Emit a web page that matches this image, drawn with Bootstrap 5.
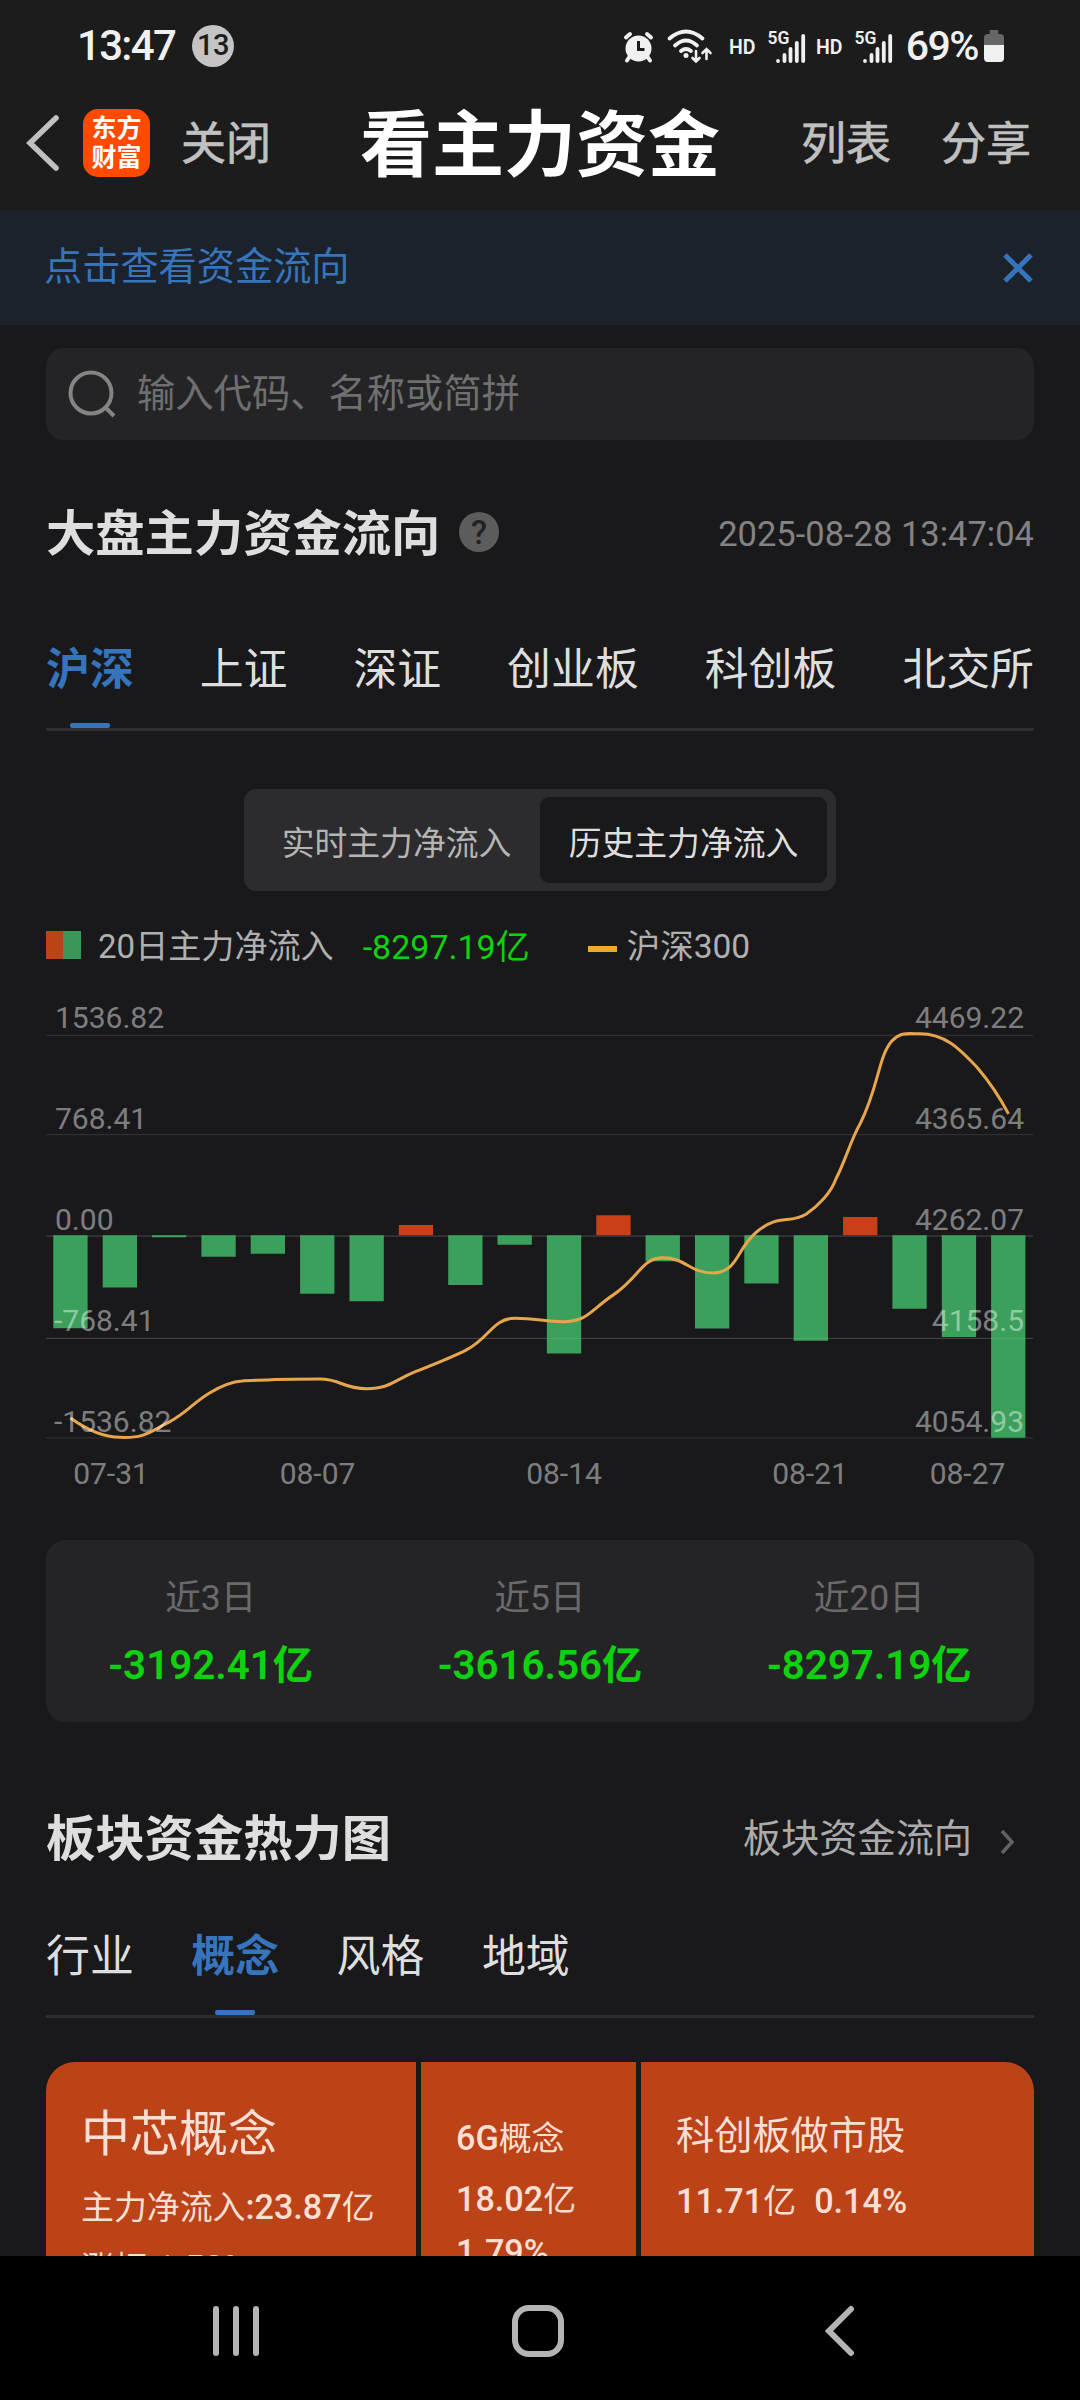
<!DOCTYPE html>
<html lang="zh-CN">
<head>
<meta charset="utf-8">
<meta name="viewport" content="width=device-width, initial-scale=1">
<title>看主力资金</title>
<link href="https://cdn.jsdelivr.net/npm/bootstrap@5.3.0/dist/css/bootstrap.min.css" rel="stylesheet">
<style>
  html, body { height: 2400px; overflow: hidden; }
  body { background: #19191b; color: #dedede; font-family: Roboto, "Noto Sans CJK SC", sans-serif; line-height: 1; }
  svg { display: block; flex: none; }
  .screen { width: 1080px; height: 2400px; }
  .statusbar { height: 76px; background: #1c1c1c; padding: 16px 76px 0 77px; color: #f0f0f0; }
  .clock { font-size: 42px; font-weight: 500; letter-spacing: -1.7px; width: 115px; padding-top: 1px; }
  .notif { width: 42px; height: 42px; background: #c4c4c4; color: #1c1c1c; font-size: 29px; font-weight: 500; letter-spacing: -.5px; }
  .batt { font-size: 41px; font-weight: 500; letter-spacing: -1.5px; margin-left: 2px; margin-right: 2px; }
  .titlebar { height: 134px; background: #1c1c1c; padding: 2px 49px 0 26px; color: #c0c0c0; font-size: 45px; -webkit-text-stroke: .7px #c0c0c0; }
  .titlebar > svg, .applogo { margin-top: -2px; }
  .titlebar h1 { font-size: 72px; font-weight: 700; color: #fff; line-height: 1; -webkit-text-stroke: 0; padding: 3px 0 0 8px; }
  .applogo { width: 67px; height: 68px; border-radius: 15px; background: #ff4a00; color: #fff; font-size: 25px; font-weight: 700; line-height: 29px; -webkit-text-stroke: 0; }
  .notice { height: 115px; background: #1c222b; color: #3674bc; padding: 0 47px 0 44px; font-size: 38.2px; }
  .page { padding: 23px 46px 0; height: 1931px; overflow: hidden; }
  .searchbox { height: 92px; border-radius: 18px; background: #242426; padding-left: 22px; font-size: 38.3px; color: #6f6f6f; }
  .sect { font-size: 49.3px; font-weight: 700; line-height: 1; padding-top: 4px; }
  .stamp { font-size: 34.5px; color: #838383; padding-top: 2px; }
  .tabline { border-bottom: 3px solid #2e2e30; font-size: 43.9px; }
  .tabline .nav-link { padding: 23px 0 0; color: #dedede; height: 100%; }
  .tabline .nav-link.active { color: #3674bc; font-weight: 700; position: relative; }
  .tabline .nav-link.active::after { content: ""; position: absolute; left: 50%; margin-left: -20px; bottom: 0; width: 40px; height: 5px; border-radius: 2px; background: #3674bc; }
  .seg { width: 592px; height: 102px; border-radius: 12px; background: #2c2c2e; padding: 8px 9px; }
  .seg .btn { font-size: 32.8px; line-height: 1; border: 0; border-radius: 9px; color: #b4b4b4; padding: 8px 0 0; }
  .seg .btn.active { background: #19191b; color: #dedede; }
  .legend { font-size: 33.1px; color: #b0b0b0; height: 40px; }
  .legend span { flex: none; }
  .up-down { width: 35px; height: 28px; background: linear-gradient(90deg, #bc4317 49%, #3a9658 49%); }
  .dash { width: 29px; height: 6px; background: #f6a530; }
  .down { color: #0fd20f; }
  .sumbox { height: 182px; border-radius: 20px; background: #242426; padding-top: 8px; }
  .sumbox .lbl { font-size: 35.5px; color: #6a6a6a; line-height: 40px; margin-top: -3px; }
  .sumbox .val { font-size: 40.3px; font-weight: 600; line-height: 46px; padding-top: 1px; }
  .more { font-size: 38.2px; color: #ababab; padding-top: 3px; }
  .heat { height: 300px; border-radius: 29px 29px 0 0; overflow: hidden; gap: 5px; color: #fbdfd4; font-weight: 500; font-size: 34.2px; }
  .heat > div { background: #bc4317; white-space: nowrap; }
  .heat span { font-weight: 400; font-size: 32.9px; }
  .heat .fs-big { font-size: 49px; }
  .heat .fs-mid { font-size: 38.2px; }
  .navkeys { height: 144px; background: #000; position: relative; z-index: 1; padding: 49px 225px 0 213px; }
</style>
</head>
<body>
<div class="screen d-flex flex-column">
  <div class="statusbar d-flex align-items-start justify-content-between flex-shrink-0">
    <div class="d-flex align-items-center pt-2">
      <div class="clock">13:47</div>
      <div class="notif rounded-circle d-flex align-items-center justify-content-center">13</div>
    </div>
    <div class="d-flex align-items-center">
      <svg width="282" height="60" viewBox="622 16 282 60" fill="none" stroke="#f0f0f0" stroke-linecap="round">
        <circle cx="638.500" cy="48.500" r="13" fill="#f0f0f0" stroke="none"/>
        <path d="M626 37.500l4-3.500M651 37.500l-4-3.500M629 57.500l-2 3M648 57.500l2 3" stroke-width="4"/>
        <path d="M638.500 41v8.500h6" stroke="#1c1c1c" stroke-width="3" stroke-linecap="butt"/>
        <path d="M669.500 38.500Q686 24.500 702.500 38.500M675 45.500Q686 35.500 697 45.500M681 51Q686 47 691 51" stroke-width="3.800"/>
        <circle cx="686" cy="55.500" r="2.500" fill="#f0f0f0" stroke="none"/>
        <path d="M696 51v10M692.500 58l3.500 3.500 3.500-3.500M706.500 59v-10M702.500 53l4-4 4 4" stroke-width="2.600"/>
        <g stroke-width="3.800">
          <path d="M778 61v0M784.500 55v6M790.500 49v12M796.800 43v18M803.200 36v25"/>
          <path d="M865 61v0M871.500 55v6M877.500 49v12M883.800 43v18M890.200 36v25"/>
        </g>
        <g fill="#f0f0f0" stroke="none" font-family="Roboto" font-weight="600">
          <text x="729" y="53.500" font-size="19.500">HD</text>
          <text x="767.500" y="43.500" font-size="17.500">5G</text>
          <text x="816" y="53.500" font-size="19.500">HD</text>
          <text x="854.500" y="43.500" font-size="17.500">5G</text>
        </g>
      </svg>
      <div class="batt">69%</div>
      <svg width="20" height="32" viewBox="0 0 21 32" preserveAspectRatio="none" class="ms-1"><path d="M6 0h9v4h2q4 0 4 4v7H0V8q0-4 4-4h2z" fill="#666"/><path d="M0 15h21v13q0 4-4 4H4q-4 0-4-4z" fill="#f0f0f0"/></svg>
    </div>
  </div>

  <header class="titlebar d-flex align-items-center flex-shrink-0">
    <svg width="33" height="58" viewBox="0 0 33 58" fill="none" stroke="#c0c0c0" stroke-width="5.500" stroke-linecap="round"><path d="M30 4L4 29l26 25"/></svg>
    <div class="applogo text-center ms-4 d-flex flex-column justify-content-center">东方<br>财富</div>
    <div class="ms-4" style="padding-left:7px">关闭</div>
    <h1 class="mb-0 mx-auto">看主力资金</h1>
    <div>列表</div>
    <div style="margin-left:50px">分享</div>
  </header>

  <div class="notice d-flex align-items-center justify-content-between flex-shrink-0">
    <span>点击查看资金流向</span>
    <svg width="30" height="30" viewBox="0 0 30 30" stroke="#3674bc" stroke-width="5"><path d="M2 2l26 26M28 2L2 28"/></svg>
  </div>

  <main class="page d-flex flex-column flex-grow-1">
    <div class="searchbox d-flex align-items-center flex-shrink-0">
      <svg width="48" height="48" viewBox="0 0 48 48" fill="none" stroke="#848484" stroke-width="4"><circle cx="23" cy="23" r="20.500"/><path d="M37 37l9 9"/></svg>
      <span style="margin-left:21px">输入代码、名称或简拼</span>
    </div>

    <div class="d-flex align-items-center flex-shrink-0" style="height:186px">
      <h2 class="sect mb-0">大盘主力资金流向</h2>
      <svg width="42" height="42" viewBox="0 0 42 42" style="margin-left:18px"><circle cx="21" cy="20" r="20" fill="#5c5c5c"/><text x="21" y="31.500" text-anchor="middle" font-size="33" font-weight="500" font-family="Roboto" fill="#222">?</text></svg>
      <span class="stamp ms-auto">2025-08-28 13:47:04</span>
    </div>

    <ul class="tabline nav flex-nowrap justify-content-between flex-shrink-0" style="height:105px">
      <li><a class="nav-link active">沪深</a></li>
      <li><a class="nav-link">上证</a></li>
      <li><a class="nav-link">深证</a></li>
      <li><a class="nav-link">创业板</a></li>
      <li><a class="nav-link">科创板</a></li>
      <li><a class="nav-link">北交所</a></li>
    </ul>

    <div class="seg d-flex mx-auto flex-shrink-0" style="margin-top:58px">
      <button class="btn flex-fill">实时主力净流入</button>
      <button class="btn active flex-fill">历史主力净流入</button>
    </div>

    <div class="legend d-flex align-items-center flex-shrink-0" style="margin-top:36px">
      <span class="up-down" style="margin-top:-4px"></span>
      <span style="margin-left:17px">20日主力净流入</span>
      <span class="down" style="margin-left:29px;font-size:34px">-8297.19亿</span>
      <span class="dash" style="margin-left:58px;margin-top:4px"></span>
      <span style="margin-left:10px;font-size:33.500px">沪深300</span>
    </div>

    <svg width="988" height="522" viewBox="46 967 988 522" class="flex-shrink-0">
      <g transform="matrix(1 0 0 1.014 0 -13.700)">
      <path d="M46 1034.500H1033M46 1132.500H1033M46 1232.500H1033M46 1333.500H1033M46 1431.500H1033" stroke="#303032" stroke-width="1.200"/>
      <g fill="#3ba05b">
        <path d="M53.300 1231.700h34.300v91.600h-34.300zM102.700 1231.700h34.300v51.600h-34.300zM152 1231.700h34.300v2h-34.300zM201.400 1231.700h34.300v21.300h-34.300zM250.700 1231.700h34.300v18.300h-34.300zM300.100 1231.700h34.300v57.600h-34.300zM349.500 1231.700h34.300v65h-34.300zM448.200 1231.700h34.300v49h-34.300zM497.500 1231.700h34.300v9.300h-34.300zM546.900 1231.700h34.300v116.600h-34.300z"/>
        <path d="M645.600 1231.700h34.300v25.600h-34.300zM695 1231.700h34.300v92h-34.300zM744.300 1231.700h34.300v47.600h-34.300zM793.700 1231.700h34.300v104h-34.300zM892.400 1231.700h34.300v72.600h-34.300zM941.800 1231.700h34.300v100.300h-34.300zM991.100 1231.700h34.300v199.600h-34.300z"/>
      </g>
      <path d="M398.800 1221.700h34.300v10h-34.300zM596.300 1212h34.300v19.700h-34.300zM843.100 1213.700h34.300v18h-34.300z" fill="#cb3f18"/>
      <path d="M46 1232.500H1033M46 1333.500H1033" stroke="#fff" stroke-opacity=".09"/>
      <path d="M70.500 1412C86 1423 104 1431 120 1431C145 1432 149 1426 169 1416C188 1406 194 1396 210 1387C222 1380 234 1376 242 1375.500C252 1374.500 262 1375 275 1374C290 1373.500 305 1373.500 320 1373.500C341 1373.500 342 1383 367 1383C390 1383 393 1375 416 1366C434 1359 450 1353 466 1345C490 1333 492 1314 515 1313.500C535 1313.500 548 1317.500 565 1317C588 1316 590 1306 614 1290C640 1272 642 1254 663 1254C686 1254 690 1269 713 1269C738 1268 736 1246 756 1229C778 1210 789 1221 806 1211C818 1203 831 1190 836 1176C845 1159 852 1135 860 1122C879 1085 878 1056 892 1040C901 1031 907 1033 920 1033C947 1033 962 1051 977 1066C990 1081 1000 1096 1008.500 1112" fill="none" stroke="#e8a64c" stroke-width="3" stroke-linejoin="round"/>
      </g>
      <g fill="#fff" fill-opacity=".46" font-family="Roboto" font-size="30">
        <text x="55" y="1028">1536.82</text><text x="55" y="1129">768.41</text><text x="55" y="1230">0.00</text><text x="54" y="1331">-768.41</text><text x="54" y="1431.500">-1536.82</text>
        <g text-anchor="end"><text x="1024" y="1028">4469.22</text><text x="1024" y="1129">4365.64</text><text x="1024" y="1230">4262.07</text><text x="1024" y="1331">4158.5</text><text x="1024" y="1431.500">4054.93</text></g>
        <g text-anchor="middle"><text x="111" y="1483.500">07-31</text><text x="317.500" y="1483.500">08-07</text><text x="564" y="1483.500">08-14</text><text x="810" y="1483.500">08-21</text><text x="967.500" y="1483.500">08-27</text></g>
      </g>
    </svg>

    <div class="sumbox row g-0 text-center align-items-center flex-shrink-0" style="margin-top:51px">
      <div class="col"><div class="lbl">近3日</div><div class="val down mt-4">-3192.41亿</div></div>
      <div class="col"><div class="lbl">近5日</div><div class="val down mt-4">-3616.56亿</div></div>
      <div class="col"><div class="lbl">近20日</div><div class="val down mt-4">-8297.19亿</div></div>
    </div>

    <div class="d-flex align-items-center flex-shrink-0" style="height:78px;margin-top:77px">
      <h2 class="sect mb-0">板块资金热力图</h2>
      <span class="more ms-auto">板块资金流向</span>
      <svg width="16" height="28" viewBox="0 0 16 28" fill="none" stroke="#626262" stroke-width="3.500" style="margin:7px 18px 0 28px"><path d="M2 3l10 11L2 25"/></svg>
    </div>

    <ul class="tabline nav flex-nowrap flex-shrink-0" style="height:105px;margin-top:36px;gap:57.500px">
      <li><a class="nav-link">行业</a></li>
      <li><a class="nav-link active">概念</a></li>
      <li><a class="nav-link">风格</a></li>
      <li><a class="nav-link">地域</a></li>
    </ul>

    <div class="heat d-flex flex-shrink-0" style="margin-top:44px">
      <div style="width:370px;padding:48px 0 0 35px">
        <div><span class="fs-big">中芯概念</span></div>
        <div style="margin-top:31px"><span>主力净流入</span>:23.87<span>亿</span></div>
        <div style="margin-top:26px"><span>涨幅</span>:1.58%</div>
      </div>
      <div style="width:215px;padding:59px 0 0 35px">
        <div>6G<span>概念</span></div>
        <div style="margin-top:26px">18.02<span>亿</span></div>
        <div style="margin-top:18px">1.79%</div>
      </div>
      <div class="flex-fill" style="padding:55px 0 0 35px">
        <div><span class="fs-mid">科创板做市股</span></div>
        <div style="margin-top:29px">11.71<span>亿</span><span style="margin-left:18px"></span>0.14%</div>
      </div>
    </div>
  </main>

  <div class="navkeys d-flex flex-shrink-0">
    <svg width="46" height="52" viewBox="0 0 46 52" stroke="#b4b4b4" stroke-width="6" stroke-linecap="round"><path d="M3 4v44M23 4v44M43 4v44"/></svg>
    <svg width="54" height="52" viewBox="0 0 54 52" fill="none" stroke="#b4b4b4" stroke-width="6" style="margin-left:252px"><rect x="4" y="3" width="46" height="46" rx="14"/></svg>
    <svg width="30" height="52" viewBox="0 0 30 52" fill="none" stroke="#b4b4b4" stroke-width="6" stroke-linecap="round" class="ms-auto"><path d="M26 4L4 26l22 22"/></svg>
  </div>
</div>
<script src="https://cdn.jsdelivr.net/npm/bootstrap@5.3.0/dist/js/bootstrap.bundle.min.js"></script>
</body>
</html>
